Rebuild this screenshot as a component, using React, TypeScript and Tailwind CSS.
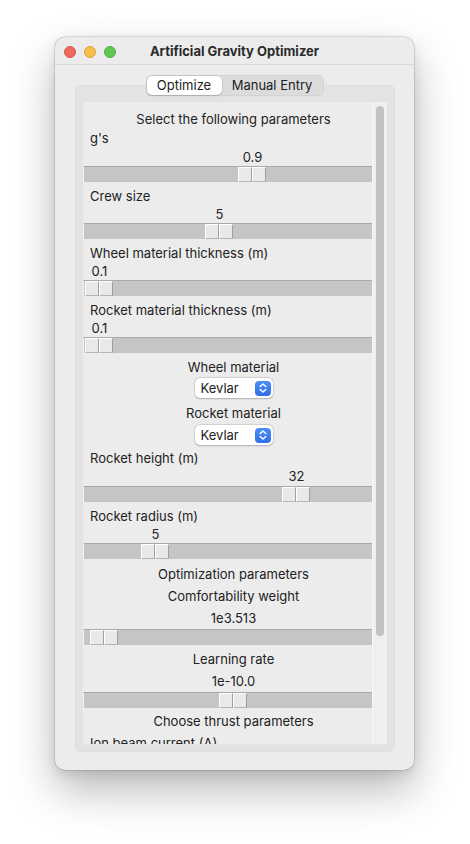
import React from "react";

const FONT = { fontFamily: 'Inter, "Noto Sans", "Liberation Sans", sans-serif' };

function Half() {
  return (
    <div className="w-[14px] h-[15px] bg-[#e9e9e9] border-t border-l border-white border-r border-b border-r-[#9f9f9f] border-b-[#b5b5b5]" />
  );
}

function Track({ pos, className = "" }: { pos: number; className?: string }) {
  return (
    <div
      className={`relative h-[16px] w-[301px] bg-[#c5c5c5] border-t border-t-[#a9a9a9] border-l border-l-[#f4f4f4] ${className}`}
    >
      <div className="absolute top-0 flex" style={{ left: pos - 1 }}>
        <Half />
        <Half />
      </div>
    </div>
  );
}

function ThumbValue({ pos, value, h = 18 }: { pos: number; value: string; h?: number }) {
  return (
    <div className="flex" style={{ height: h, lineHeight: `${h}px` }}>
      <div className="w-[29px] flex justify-center whitespace-nowrap" style={{ marginLeft: pos }}>
        {value}
      </div>
    </div>
  );
}

function LeftSlider({ label, value, pos }: { label: string; value: string; pos: number }) {
  return (
    <div>
      <div className="pt-[5px] leading-[18px] pl-[7px]">{label}</div>
      <ThumbValue pos={pos} value={value} />
      <Track pos={pos} />
    </div>
  );
}

function Center({ children, pt = 4 }: { children: React.ReactNode; pt?: number }) {
  return (
    <div className="leading-[18px] text-center whitespace-nowrap" style={{ paddingTop: pt }}>
      {children}
    </div>
  );
}

function Popup({ className = "" }: { className?: string }) {
  return (
    <div className={`flex justify-center ${className}`}>
      <div className="w-[78px] h-[20px] rounded-[5px] bg-white shadow-[0_0_0_0.5px_rgba(0,0,0,0.12),0_0.5px_2px_rgba(0,0,0,0.22)] flex items-center justify-between pl-[6px] pr-[2px]">
        <span className="leading-[20px]">Kevlar</span>
        <div className="w-[16px] h-[15px] rounded-[4px] bg-gradient-to-b from-[#4d8ff8] to-[#2f6fe8] flex items-center justify-center">
          <svg width="10" height="12" viewBox="0 0 10 12" fill="none">
            <path d="M2.2 4.6 L5 2 L7.8 4.6" stroke="white" strokeWidth="1.4" strokeLinecap="round" strokeLinejoin="round" />
            <path d="M2.2 7.4 L5 10 L7.8 7.4" stroke="white" strokeWidth="1.4" strokeLinecap="round" strokeLinejoin="round" />
          </svg>
        </div>
      </div>
    </div>
  );
}

export default function App() {
  return (
    <div className="w-[470px] h-[844px] bg-white pt-[37px] pl-[55px] text-[13px] text-[#222]" style={FONT}>
      <div className="w-[359px] h-[733px] rounded-[10px] bg-[#ececec] flex flex-col overflow-hidden shadow-[0_0_0_0.5px_rgba(0,0,0,0.22),0_20px_44px_rgba(0,0,0,0.28),0_4px_12px_rgba(0,0,0,0.1)]">
        {/* Title bar */}
        <div className="h-[28px] grid grid-cols-[1fr_auto_1fr] border-b border-[#d8d8d8]">
          <div className="flex gap-[8px] pl-[9px] pt-[9px]">
            <div className="w-[12px] h-[12px] rounded-full bg-[#ee6a5f] border-[0.5px] border-[#d9574d]" />
            <div className="w-[12px] h-[12px] rounded-full bg-[#f5be4f] border-[0.5px] border-[#dba63b]" />
            <div className="w-[12px] h-[12px] rounded-full bg-[#62c655] border-[0.5px] border-[#4fae43]" />
          </div>
          <div className="font-bold text-[13px] leading-[28px] text-[#2b2b2b]">Artificial Gravity Optimizer</div>
          <div />
        </div>

        {/* Body */}
        <div className="flex-1 px-[20px] pt-[10px]">
          <div className="relative z-10 mx-auto w-[178px] h-[21px] rounded-[6px] bg-[#dcdcdc] shadow-[inset_0_0_0_0.5px_rgba(0,0,0,0.08)] flex items-center p-[1px]">
            <div className="w-[75px] h-[19px] rounded-[5px] bg-white shadow-[0_0_0_0.5px_rgba(0,0,0,0.12),0_1px_1.5px_rgba(0,0,0,0.15)] flex items-center justify-center leading-[19px] text-[#1d1d1d]">
              Optimize
            </div>
            <div className="flex-1 text-center leading-[19px] text-[#1d1d1d]">Manual Entry</div>
          </div>

          <div className="-mt-[11px] w-[320px] h-[667px] rounded-[6px] bg-[#e3e3e3] shadow-[inset_0_0_0_0.5px_rgba(0,0,0,0.04)] pt-[17px] px-[8px] flex items-start">
            {/* canvas viewport */}
            <div className="w-[289px] h-[642px] overflow-hidden bg-[#ececec]">
              <div className="w-[301px] pt-[7px]">
                <div className="h-[20px] leading-[20px] text-center">Select the following parameters</div>
                <div className="h-[19px] leading-[19px] pl-[7px]">g's</div>
                <ThumbValue pos={155} value="0.9" />
                <Track pos={155} />

                <LeftSlider label="Crew size" value="5" pos={122} />
                <LeftSlider label="Wheel material thickness (m)" value="0.1" pos={2} />
                <LeftSlider label="Rocket material thickness (m)" value="0.1" pos={2} />

                <Center pt={5}>Wheel material</Center>
                <Popup className="mt-[2px]" />
                <Center pt={6}>Rocket material</Center>
                <Popup className="mt-[3px]" />

                <div className="pt-[4px] leading-[18px] pl-[7px]">Rocket height (m)</div>
                <ThumbValue pos={199} value="32" h={19} />
                <Track pos={199} />

                <LeftSlider label="Rocket radius (m)" value="5" pos={58} />

                <Center pt={6}>Optimization parameters</Center>
                <Center pt={4}>Comfortability weight</Center>
                <Center pt={4}>1e3.513</Center>
                <Track pos={7} className="mt-[2px]" />

                <Center pt={5}>Learning rate</Center>
                <Center pt={4}>1e-10.0</Center>
                <Track pos={136} className="mt-[2px]" />

                <Center pt={4}>Choose thrust parameters</Center>
                <div className="pt-[4px] leading-[18px] pl-[7px]">Ion beam current (A)</div>
              </div>
            </div>
            {/* scrollbar */}
            <div className="w-[15px] h-[642px] bg-[#efefef] border-l border-[#f8f8f8] pl-[3px] pt-[4px]">
              <div className="w-[8px] h-[530px] rounded-full bg-[#c2c2c2]" />
            </div>
          </div>
        </div>
      </div>
    </div>
  );
}
